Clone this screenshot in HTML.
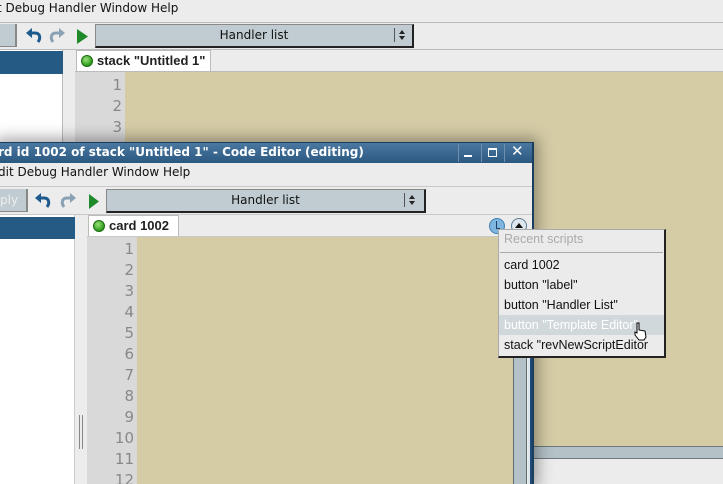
<!DOCTYPE html>
<html><head><style>
*{margin:0;padding:0;box-sizing:border-box}
html,body{width:723px;height:484px;overflow:hidden}
body{position:relative;background:#ececec;font-family:"DejaVu Sans","Liberation Sans",sans-serif;font-size:12px;color:#222}
.a{position:absolute}
.menu{font-size:12px;color:#111;white-space:nowrap}
.dd{background:#c0ccd1;border:1px solid #888;border-right:2px solid #222;border-bottom:2px solid #222;text-align:center;line-height:21px;font-size:12px;color:#111}
.ln{font-family:"DejaVu Sans",sans-serif;font-size:15px;color:#888;text-align:right;line-height:21px}
.tab{background:#fff;border:1px solid #bbb;border-bottom:none;font-weight:bold;font-family:"Liberation Sans",sans-serif;font-size:13px;line-height:20px}
.dot{display:inline-block;width:12px;height:12px;border-radius:50%;background:radial-gradient(circle at 40% 35%,#9be27a,#2a9a1a 70%);border:1px solid #1d6b13;vertical-align:-2px;margin:0 4px 0 4px}
.pi{padding-left:5px;height:20px;line-height:20px;font-family:"Liberation Sans",sans-serif;font-size:12.5px;color:#111}
</style></head><body>
<!-- background window -->
<div class="a menu" style="left:-3px;top:1px">t Debug Handler Window Help</div>
<div class="a" style="left:0;top:22px;width:723px;height:1px;background:#bbb"></div>
<div class="a" style="left:0;top:24px;width:17px;height:23px;background:#c0ccd1;border-right:2px solid #888;border-bottom:1px solid #888"></div>
<svg class="a" style="left:24px;top:26px" width="22" height="20"><path d="M14 16 C17 12 16 7 11 7 L6 7" fill="none" stroke="#1e5a8e" stroke-width="3"/><path d="M2 7 L8 2 L8 12Z" fill="#1e5a8e"/></svg>
<svg class="a" style="left:47px;top:26px" width="22" height="20"><path d="M6 16 C3 12 4 7 9 7 L14 7" fill="none" stroke="#8aa2b4" stroke-width="3"/><path d="M18 7 L12 2 L12 12Z" fill="#8aa2b4"/></svg>
<svg class="a" style="left:76px;top:28px" width="14" height="18"><path d="M1 1 L12 8.5 L1 16Z" fill="#1f8a2a"/></svg>
<div class="a dd" style="left:95px;top:24px;width:319px;height:24px">Handler list</div>
<div class="a" style="left:394px;top:28px;width:1px;height:14px;background:#555"></div>
<svg class="a" style="left:398px;top:28px" width="8" height="14"><path d="M1 6 L4 2 L7 6Z M1 8 L4 12 L7 8Z" fill="#222"/></svg>
<div class="a" style="left:0;top:49px;width:723px;height:1px;background:#bbb"></div>
<div class="a" style="left:0;top:50px;width:63px;height:434px;background:#fff;border-right:1px solid #bbb"></div>
<div class="a" style="left:0;top:51px;width:63px;height:23px;background:#245a84"></div>
<div class="a" style="left:64px;top:50px;width:11px;height:434px;background:#ececec"></div>
<div class="a tab" style="left:76px;top:50px;width:135px;height:22px"><span class="dot"></span>stack "Untitled 1"</div>
<div class="a" style="left:75px;top:71px;width:648px;height:1px;background:#bbb"></div>
<div class="a" style="left:75px;top:72px;width:50px;height:412px;background:#d9d9d9"></div>
<div class="a ln" style="left:75px;top:75px;width:47px">1<br>2<br>3</div>
<div class="a" style="left:125px;top:72px;width:598px;height:375px;background:#d5cca6"></div>
<div class="a" style="left:533px;top:446px;width:190px;height:1px;background:#6b7a80"></div>
<div class="a" style="left:533px;top:447px;width:190px;height:12px;background:#b4c1c6;border-bottom:1px solid #6b7a80"></div>
<div class="a" style="left:533px;top:460px;width:190px;height:24px;background:#ececec"></div>
<!-- shadow -->
<div class="a" style="left:0;top:142px;width:534px;height:342px;box-shadow:0 0 14px 4px rgba(0,0,0,0.35)"></div>
<!-- front window -->
<div class="a" style="left:0;top:142px;width:534px;height:342px;background:#ececec;border-right:2px solid #1b3d5e;border-top:1px solid #1b3d5e"></div>
<div class="a" style="left:0;top:143px;width:532px;height:20px;background:linear-gradient(#4a78a0,#2a5880)"></div>
<div class="a" style="left:-2px;top:145px;color:#fff;font-weight:bold;font-size:12px;font-family:'DejaVu Sans',sans-serif;white-space:nowrap">rd id 1002 of stack "Untitled 1" - Code Editor (editing)</div>
<div class="a" style="left:458px;top:144px;width:1px;height:18px;background:#7090b0"></div>
<div class="a" style="left:481px;top:144px;width:1px;height:18px;background:#7090b0"></div>
<div class="a" style="left:504px;top:144px;width:1px;height:18px;background:#7090b0"></div>
<div class="a" style="left:464px;top:155px;width:8px;height:2px;background:#fff"></div>
<div class="a" style="left:488px;top:148px;width:9px;height:9px;border:2px solid #fff;border-width:2px 1px 1px 1px"></div>
<div class="a" style="left:511px;top:142px;color:#fff;font-size:15px;font-weight:bold">✕</div>
<div class="a menu" style="left:-2px;top:165px">dit Debug Handler Window Help</div>
<div class="a" style="left:0;top:186px;width:532px;height:1px;background:#c8c8c8"></div>
<div class="a" style="left:0;top:189px;width:28px;height:23px;background:#c0ccd1;border-right:2px solid #888;border-bottom:1px solid #888;color:#eee;font-size:12px;line-height:22px">ply</div>
<svg class="a" style="left:33px;top:191px" width="22" height="20"><path d="M14 16 C17 12 16 7 11 7 L6 7" fill="none" stroke="#1e5a8e" stroke-width="3"/><path d="M2 7 L8 2 L8 12Z" fill="#1e5a8e"/></svg>
<svg class="a" style="left:58px;top:191px" width="22" height="20"><path d="M6 16 C3 12 4 7 9 7 L14 7" fill="none" stroke="#8aa2b4" stroke-width="3"/><path d="M18 7 L12 2 L12 12Z" fill="#8aa2b4"/></svg>
<svg class="a" style="left:88px;top:193px" width="14" height="18"><path d="M1 1 L11 8.5 L1 16Z" fill="#1f8a2a"/></svg>
<div class="a dd" style="left:106px;top:189px;width:320px;height:24px">Handler list</div>
<div class="a" style="left:404px;top:193px;width:1px;height:14px;background:#555"></div>
<svg class="a" style="left:408px;top:193px" width="8" height="14"><path d="M1 6 L4 2 L7 6Z M1 8 L4 12 L7 8Z" fill="#222"/></svg>
<div class="a" style="left:0;top:214px;width:532px;height:1px;background:#c8c8c8"></div>
<div class="a" style="left:0;top:215px;width:75px;height:269px;background:#fff;border-right:1px solid #ccc"></div>
<div class="a" style="left:0;top:217px;width:75px;height:22px;background:#245a84"></div>
<div class="a" style="left:79px;top:415px;width:1px;height:34px;background:#888"></div>
<div class="a" style="left:82px;top:415px;width:1px;height:34px;background:#888"></div>
<div class="a tab" style="left:88px;top:215px;width:91px;height:22px"><span class="dot"></span>card 1002</div>
<div class="a" style="left:87px;top:236px;width:445px;height:1px;background:#c8c8c8"></div>
<div class="a" style="left:489px;top:218px;width:16px;height:16px;border-radius:50%;background:#7fb6e0;border:1px solid #3f7fb0"></div>
<div class="a" style="left:496px;top:221px;width:1px;height:7px;background:#1c3f66"></div>
<div class="a" style="left:496px;top:228px;width:4px;height:1px;background:#1c3f66"></div>
<div class="a" style="left:511px;top:218px;width:16px;height:16px;border-radius:50%;background:#dfe7ee;border:1px solid #5a7a94"></div>
<svg class="a" style="left:514px;top:222px" width="10" height="8"><path d="M1 6 L5 1 L9 6Z" fill="#111"/></svg>
<div class="a" style="left:87px;top:237px;width:50px;height:247px;background:#d9d9d9"></div>
<div class="a ln" style="left:84px;top:239px;width:50px">1<br>2<br>3<br>4<br>5<br>6<br>7<br>8<br>9<br>10<br>11<br>12</div>
<div class="a" style="left:137px;top:237px;width:376px;height:247px;background:#d5cca6"></div>
<div class="a" style="left:513px;top:237px;width:1px;height:247px;background:#5f6e75"></div>
<div class="a" style="left:514px;top:237px;width:13px;height:247px;background:#b4c1c6;border-right:1px solid #5f6e75"></div>
<div class="a" style="left:528px;top:237px;width:2px;height:247px;background:#dfe7ec"></div>
<div class="a" style="left:530px;top:237px;width:2px;height:247px;background:#1e4a78"></div>
<!-- popup -->
<div class="a" style="left:498px;top:229px;width:168px;height:129px;background:#ebebeb;border:1px solid #aaa;border-right:2px solid #222;border-bottom:2px solid #222">
<div class="pi" style="color:#aaa;height:21px;line-height:19px">Recent scripts</div>
<div style="height:1px;background:#aaa;margin:1px 1px 2px"></div>
<div class="pi">card 1002</div>
<div class="pi">button "label"</div>
<div class="pi">button "Handler List"</div>
<div class="pi" style="background:#d0d8dc;color:#fff">button "Template Editor"</div>
<div class="pi">stack "revNewScriptEditor</div>
</div>
<svg class="a" style="left:633px;top:322px" width="16" height="20"><path d="M4 1 L6 1 L6 8 L12 9 L13 15 L11 18 L6 18 L2 13 L2 10 L4 11Z" fill="#fff" stroke="#000" stroke-width="1"/></svg>
</body></html>
